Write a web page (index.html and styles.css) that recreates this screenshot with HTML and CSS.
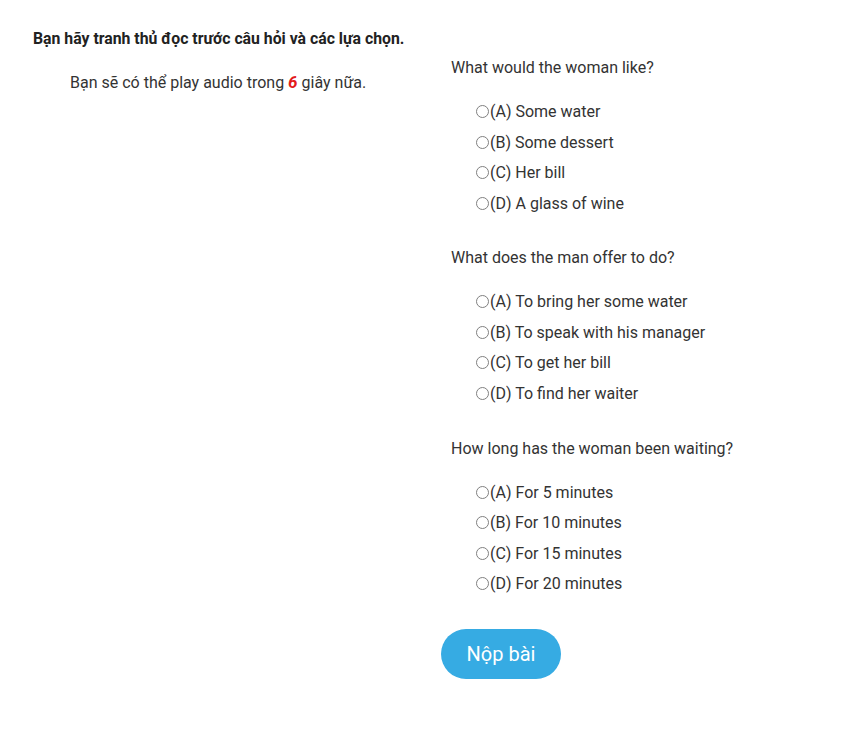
FILE: index.html
```html
<!DOCTYPE html>
<html>
<head>
<meta charset="utf-8">
<link rel="stylesheet" href="styles.css">
</head>
<body>
<div class="page">
  <div class="title">Bạn hãy tranh thủ đọc trước câu hỏi và các lựa chọn.</div>
  <div class="row">
    <div class="col-left">
      <div class="countdown">Bạn sẽ có thể play audio trong <span class="num">6</span> giây nữa.</div>
    </div>
    <div class="col-right">
      <div class="group">
        <div class="question">What would the woman like?</div>
        <div class="options">
          <label class="opt"><span class="radio"></span>(A) Some water</label>
          <label class="opt"><span class="radio"></span>(B) Some dessert</label>
          <label class="opt"><span class="radio"></span>(C) Her bill</label>
          <label class="opt"><span class="radio"></span>(D) A glass of wine</label>
        </div>
      </div>
      <div class="group">
        <div class="question">What does the man offer to do?</div>
        <div class="options">
          <label class="opt"><span class="radio"></span>(A) To bring her some water</label>
          <label class="opt"><span class="radio"></span>(B) To speak with his manager</label>
          <label class="opt"><span class="radio"></span>(C) To get her bill</label>
          <label class="opt"><span class="radio"></span>(D) To find her waiter</label>
        </div>
      </div>
      <div class="group">
        <div class="question">How long has the woman been waiting?</div>
        <div class="options">
          <label class="opt"><span class="radio"></span>(A) For 5 minutes</label>
          <label class="opt"><span class="radio"></span>(B) For 10 minutes</label>
          <label class="opt"><span class="radio"></span>(C) For 15 minutes</label>
          <label class="opt"><span class="radio"></span>(D) For 20 minutes</label>
        </div>
      </div>
      <button class="submit">Nộp bài</button>
    </div>
  </div>
</div>
</body>
</html>
```
FILE: styles.css
```css
html, body {
  margin: 0;
  padding: 0;
  background: #fff;
}
body {
  font-family: Roboto, "Liberation Sans", sans-serif;
  color: #333;
}
.page {
  padding: 29px 18px 0 33px;
}
.title {
  font-size: 15.8px;
  font-weight: bold;
  line-height: 20px;
  color: #222;
}
.row {
  display: flex;
  margin-top: 9px;
}
.col-left {
  width: 418px;
  flex: none;
}
.countdown {
  font-size: 16px;
  line-height: 20px;
  margin-top: 14px;
  padding-left: 37px;
}
.num {
  color: #e31b1b;
  font-weight: bold;
  font-style: italic;
  font-size: 17px;
}
.col-right {
  flex: 1;
}
.group {
  margin-bottom: 30px;
}
.question {
  font-size: 16px;
  line-height: 20px;
  margin-bottom: 18.5px;
}
.options {
  padding-left: 25px;
}
.opt {
  display: flex;
  align-items: center;
  height: 30.45px;
  font-size: 16px;
}
.radio {
  width: 11px;
  height: 11px;
  border: 1px solid #808080;
  border-radius: 50%;
  margin-right: 1px;
  flex: none;
}
.submit {
  display: block;
  margin-left: -10px;
  margin-top: 0;
  width: 120px;
  height: 50px;
  border: none;
  border-radius: 25px;
  background: #36abe3;
  color: #fff;
  font-family: Roboto, "Liberation Sans", sans-serif;
  font-size: 20px;
}
```
